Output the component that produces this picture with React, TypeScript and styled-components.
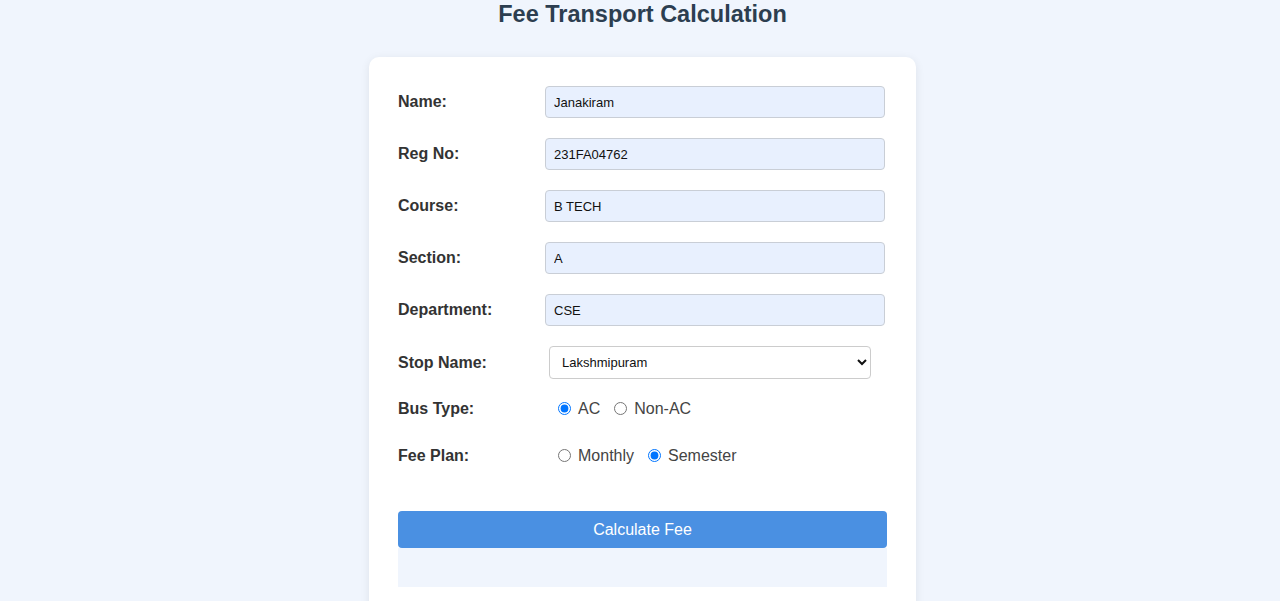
import React from "react";
import styled, { createGlobalStyle } from "styled-components";

const Global = createGlobalStyle`
  html, body { margin: 0; padding: 0; background: #f0f5fd; }
  body { font-family: "Liberation Sans", Arial, sans-serif; color: #333; }
`;

const Page = styled.div`
  display: flex;
  flex-direction: column;
  align-items: center;
  padding-left: 5px;
  min-height: 601px;
`;

const Title = styled.h1`
  margin: 1px 0 0;
  font-size: 23.5px;
  line-height: 26px;
  font-weight: 700;
  color: #2c3e50;
`;

const Card = styled.div`
  margin-top: 30px;
  width: 547px;
  box-sizing: border-box;
  background: #fff;
  border-radius: 10px;
  box-shadow: 0 2px 10px rgba(0, 0, 0, 0.08);
  padding: 29px 29px 29px 29px;
`;

const Row = styled.div<{ $mb?: number; $h?: number }>`
  display: flex;
  align-items: center;
  height: ${(p) => p.$h ?? 32}px;
  margin-bottom: ${(p) => p.$mb ?? 20}px;
`;

const Label = styled.label`
  width: 147px;
  flex: none;
  font-size: 16px;
  font-weight: 700;
  color: #333;
`;

const Input = styled.input`
  width: 340px;
  height: 32px;
  box-sizing: border-box;
  border: 1px solid #c9ced6;
  border-radius: 4px;
  background: #e8f0fe;
  padding: 0 8px;
  font-family: "Liberation Sans", Arial, sans-serif;
  font-size: 13px;
  color: #111;
  outline: none;
`;

const Select = styled.select`
  margin-left: 4px;
  width: 322px;
  height: 33px;
  box-sizing: border-box;
  border: 1px solid #ccc;
  border-radius: 4px;
  background: #fff;
  padding: 0 8px;
  font-family: "Liberation Sans", Arial, sans-serif;
  font-size: 13px;
  color: #111;
`;

const RadioGroup = styled.div`
  display: flex;
  align-items: center;
  margin-left: 8px;
`;

const RadioLabel = styled.label`
  display: flex;
  align-items: center;
  font-size: 16px;
  color: #444;
  margin-right: 9px;
`;

const Radio = styled.input`
  width: 13px;
  height: 13px;
  margin: 0 7px 0 5px;
`;

const Button = styled.button`
  display: block;
  width: 100%;
  height: 37px;
  border: none;
  border-radius: 4px;
  background: #4a90e2;
  color: #fff;
  font-family: "Liberation Sans", Arial, sans-serif;
  font-size: 16px;
  cursor: pointer;
`;

const Result = styled.div`
  height: 39px;
  background: #f0f5fd;
`;

const fields = [
  ["Name:", "Janakiram"],
  ["Reg No:", "231FA04762"],
  ["Course:", "B TECH"],
  ["Section:", "A"],
  ["Department:", "CSE"],
];

export default function App() {
  return (
    <>
      <Global />
      <Page>
        <Title>Fee Transport Calculation</Title>
        <Card>
          {fields.map(([l, v]) => (
            <Row key={l}>
              <Label>{l}</Label>
              <Input defaultValue={v} />
            </Row>
          ))}
          <Row $h={33} $mb={20}>
            <Label>Stop Name:</Label>
            <Select defaultValue="Lakshmipuram">
              <option>Lakshmipuram</option>
              <option>Guntur</option>
            </Select>
          </Row>
          <Row $h={19} $mb={28}>
            <Label>Bus Type:</Label>
            <RadioGroup>
              <RadioLabel>
                <Radio type="radio" name="bus" defaultChecked />
                AC
              </RadioLabel>
              <RadioLabel>
                <Radio type="radio" name="bus" />
                Non-AC
              </RadioLabel>
            </RadioGroup>
          </Row>
          <Row $h={19} $mb={46}>
            <Label>Fee Plan:</Label>
            <RadioGroup>
              <RadioLabel>
                <Radio type="radio" name="plan" />
                Monthly
              </RadioLabel>
              <RadioLabel>
                <Radio type="radio" name="plan" defaultChecked />
                Semester
              </RadioLabel>
            </RadioGroup>
          </Row>
          <Button>Calculate Fee</Button>
          <Result />
        </Card>
      </Page>
    </>
  );
}
